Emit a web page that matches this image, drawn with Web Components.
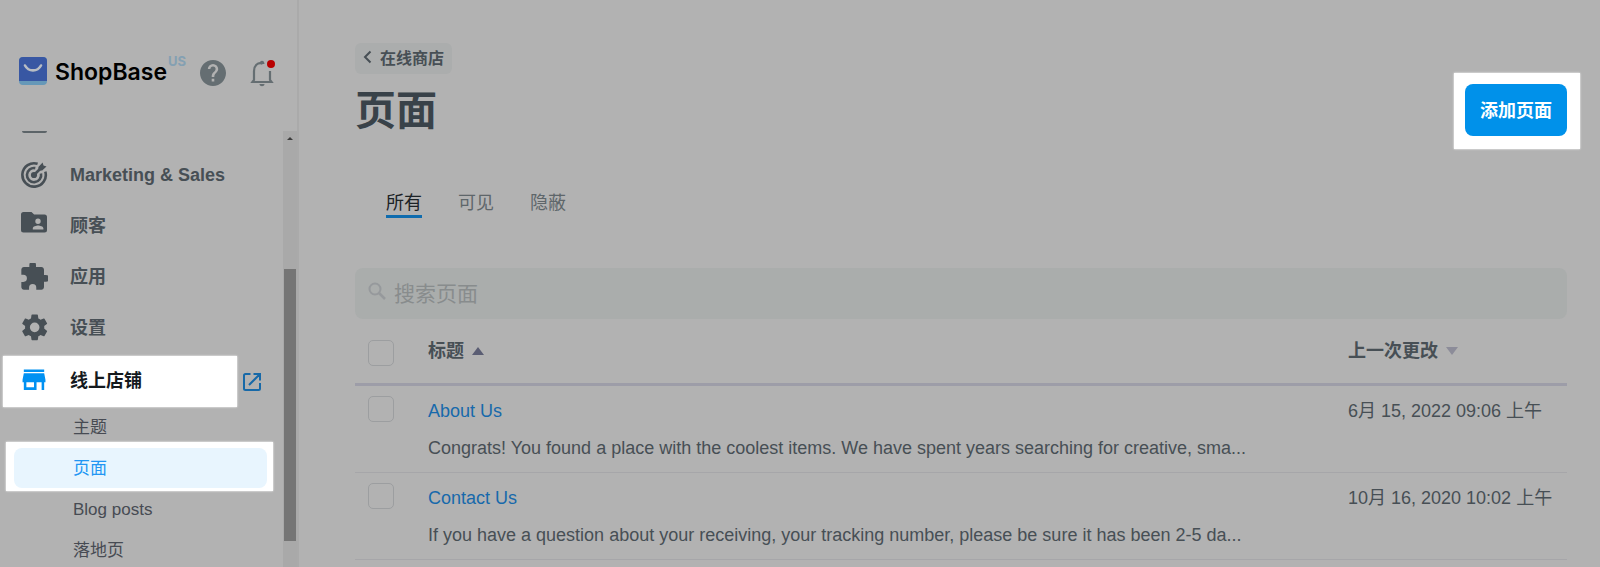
<!DOCTYPE html>
<html lang="zh-CN">
<head>
<meta charset="utf-8">
<meta name="viewport" content="width=device-width, initial-scale=1">
<title>页面 - ShopBase</title>
<style>
  body {
    margin: 0;
    background: #b2b2b2;
    color: #474f55;
    font: 18px/24px "Liberation Sans", "Noto Sans CJK SC", sans-serif;
  }
</style>
</head>
<body>
<admin-shell>
  <side-bar slot="side">
    <nav-item icon="target">Marketing &amp; Sales</nav-item>
    <nav-item icon="folder">顾客</nav-item>
    <nav-item icon="puzzle">应用</nav-item>
    <nav-item icon="gear">设置</nav-item>
    <nav-item icon="store" spotlight>线上店铺</nav-item>
    <sub-item>主题</sub-item>
    <sub-item spotlight>页面</sub-item>
    <sub-item>Blog posts</sub-item>
    <sub-item>落地页</sub-item>
  </side-bar>
  <page-header heading="页面" back="在线商店" action="添加页面"></page-header>
  <filter-tabs></filter-tabs>
  <search-field label="搜索页面"></search-field>
  <pages-table></pages-table>
</admin-shell>

<script>
const ICONS = {
  target: '<svg width="28" height="28" viewBox="0 0 28 28" fill="none" stroke="currentColor" stroke-width="2.6"><path d="M17.6 2.8A11.7 11.7 0 1 0 25.3 10.6"/><path d="M15.3 7.1A7.1 7.1 0 1 0 21 12.6"/><circle cx="14" cy="14" r="3.1" fill="currentColor" stroke="none"/><path d="M14 14l6-6"/><path d="M18.4 9.6V5.9L22.6 1.6l.9 3 3 .9-4.300 4.100z" fill="currentColor" stroke="none"/></svg>',
  folder: '<svg width="28" height="28" viewBox="0 0 28 28" fill="currentColor"><path fill-rule="evenodd" d="M3.500 0h8l2.600 2.600H24.500A2.500 2.500 0 0 1 27 5.100V18a2.500 2.500 0 0 1-2.500 2.500h-21A2.500 2.500 0 0 1 1 18V2.500A2.500 2.500 0 0 1 3.500 0zM18 6.600a2.700 2.700 0 1 0 0 5.400a2.700 2.700 0 0 0 0-5.400zM12.800 17.500h10.600v-1.200c0-1.800-3.500-2.800-5.300-2.800s-5.300 1-5.300 2.800z"/></svg>',
  puzzle: '<svg width="28" height="28" viewBox="1 2 21 21" fill="currentColor"><path d="M20.500 11H19V7c0-1.100-.9-2-2-2h-4V3.500a2.500 2.500 0 0 0-5 0V5H4c-1.100 0-2 .9-2 2v3.800h1.500a2.700 2.700 0 0 1 0 5.400H2V20c0 1.100.9 2 2 2h3.800v-1.500a2.700 2.700 0 0 1 5.400 0V22H17c1.100 0 2-.9 2-2v-4h1.500a2.500 2.500 0 0 0 0-5z"/></svg>',
  gear: '<svg width="28" height="28" viewBox="1 2 21 21" fill="currentColor"><path d="M19.140 12.940c.04-.3.060-.61.060-.94s-.020-.640-.070-.940l2.030-1.580a.49.49 0 0 0 .12-.61l-1.920-3.320a.488.488 0 0 0-.59-.22l-2.390.96c-.5-.38-1.030-.7-1.620-.94l-.36-2.540a.484.484 0 0 0-.48-.41h-3.840c-.24 0-.43.17-.47.41l-.36 2.540c-.59.24-1.130.57-1.620.94l-2.390-.96c-.22-.08-.47 0-.59.22L2.740 8.870c-.12.21-.08.47.12.61l2.030 1.580c-.05.3-.09.63-.09.94s.020.640.070.940l-2.030 1.580a.49.49 0 0 0-.12.61l1.920 3.320c.12.22.37.29.59.22l2.390-.96c.5.38 1.030.7 1.620.94l.36 2.540c.05.24.24.41.48.41h3.840c.24 0 .44-.17.47-.41l.36-2.540c.59-.24 1.130-.56 1.620-.94l2.390.96c.22.08.47 0 .59-.22l1.920-3.320c.12-.22.070-.47-.12-.61zM12 15.600A3.600 3.600 0 1 1 12 8.400a3.600 3.600 0 0 1 0 7.200z"/></svg>',
  store: '<svg width="28" height="28" viewBox="1 2 22 22" fill="currentColor"><path d="M20 4H4v2h16V4zm1 10v-2l-1-5H4l-1 5v2h1v6h10v-6h4v6h2v-6h1zm-9 4H6v-4h6v4z"/></svg>'
};

function define(name, css, html, setup) {
  const template = document.createElement('template');
  template.innerHTML = `<style>*{box-sizing:border-box}${css}</style>${html}`;
  customElements.define(name, class extends HTMLElement {
    constructor() {
      super();
      this.attachShadow({ mode: 'open' }).append(template.content.cloneNode(true));
    }
    connectedCallback() {
      if (setup) setup(this.shadowRoot, this);
    }
  });
}

define('admin-shell', `
  :host { display: flex; height: 100vh; overflow: hidden; }
  aside { flex: none; width: 299px; border-right: 2px solid #aaaaaa; }
  main { flex: 1; min-width: 0; padding: 43px 33px 0 56px; overflow: hidden; }
`, `<aside><slot name="side"></slot></aside><main><slot></slot></main>`);

define('brand-bar', `
  :host { display: flex; align-items: center; height: 131px; padding: 12px 22px 0 18px; }
  .logo { display: flex; align-items: center; gap: 7px; color: #000; text-decoration: none;
    font: 600 23px/32px Inter, sans-serif; }
  .logo svg, button svg { display: block; }
  sup { align-self: flex-start; height: 32px; margin: 41px 0 0 1px; color: #84a0b2; font: 700 13px/16px Inter, sans-serif; }
  button { border: 0; padding: 3px 0 0; background: none; color: #656e72; }
  .help { margin-left: 14px; }
  .bell { margin-left: auto; }
`, `
  <a class="logo" href="#"><svg width="30" height="30" viewBox="0 0 30 30"><rect x="1" y="0" width="28" height="28" rx="4" fill="#6698b8"/><path d="M5 0h20a4 4 0 0 1 4 4v20H1V4a4 4 0 0 1 4-4z" fill="#3857a3"/><path d="M7 8.500c3.500 6.500 12.500 6.500 16 0" fill="none" stroke="#b8bdc4" stroke-width="2.600" stroke-linecap="round"/></svg><span>ShopBase</span></a>
  <sup>US</sup>
  <button class="help" aria-label="Help"><svg width="26" height="26" viewBox="2 2 20 20" fill="currentColor"><path d="M12 2C6.480 2 2 6.480 2 12s4.480 10 10 10 10-4.480 10-10S17.520 2 12 2zm1 16.500h-2v-2h2zm2.070-7.250l-.9.920C13.450 12.900 13 13.500 13 15h-2v-.5c0-1.100.45-2.100 1.170-2.830l1.240-1.260c.37-.36.590-.86.590-1.410a2 2 0 0 0-4 0H8a4 4 0 0 1 8 0c0 .88-.36 1.680-.93 2.250z"/></svg></button>
  <button class="bell" aria-label="Notifications"><svg width="26" height="28" viewBox="0 0 26 28" fill="none" stroke="currentColor"><path d="M13.500 4.600C8.500 3 5 7 5 12v9L3.500 23h19L21 21V12" stroke-width="2.200"/><path d="M10.500 5c0-4.500 5-4.500 5 0z" fill="currentColor" stroke="none"/><path d="M10.500 25h5c0 3-5 3-5 0z" fill="currentColor" stroke="none"/><circle cx="22" cy="5" r="4" fill="#b80000" stroke="none"/></svg></button>
`);

define('side-bar', `
  :host { display: flex; flex-direction: column; height: 100vh; }
  .scroll { flex: 1; min-height: 0; display: flex; }
  nav { flex: 1; min-width: 0; overflow: hidden; }
  hr { width: 25px; height: 2px; margin: 0 0 16px 22px; border: 0; background: #5c6468; border-radius: 0 0 2px 2px; }
  .rail { flex: none; width: 14px; padding: 5px 1px 0; background: #a9a9a9; display: flex; flex-direction: column; align-items: center; }
  .thumb { width: 12px; height: 63%; margin-top: 128px; background: #757575; }
  svg { display: block; flex: none; }
`, `
  <brand-bar></brand-bar>
  <div class="scroll">
    <nav><hr><slot></slot></nav>
    <div class="rail"><svg width="6" height="5" viewBox="0 0 6 5"><path d="M0 4l3-3 3 3z" fill="#3d3d3d"/></svg><div class="thumb"></div></div>
  </div>
`);

define('nav-item', `
  :host { display: flex; align-items: center; height: 51px; }
  a { display: flex; align-items: center; width: 234px; height: 100%; gap: 22px; padding-left: 20px;
    color: #474f55; font-weight: 700; text-decoration: none; }
  .icon { display: flex; width: 28px; flex: none; }
  :host([spotlight]) { margin-top: 3px; padding-left: 3px; gap: 5px; }
  :host([spotlight]) .main { padding: 0 0 2px 17px; background: #fff; color: #151a1e; box-shadow: 0 0 2px #fff; }
  :host([spotlight]) .icon { color: #0091f2; }
  .open { width: 20px; padding: 0; color: #1769a8; }
`, `<a class="main" href="#"><span class="icon"></span><slot></slot></a>
  <a class="open" href="#" aria-label="Open store"><svg width="20" height="20" viewBox="0 0 20 20" fill="none" stroke="currentColor" stroke-width="2"><path d="M8.500 2H3.500A1.500 1.500 0 0 0 2 3.500v13A1.500 1.500 0 0 0 3.500 18h13a1.500 1.500 0 0 0 1.500-1.500V11M11.500 2H18v6.500M18 2L7 13"/></svg></a>`,
  (root, host) => {
    root.querySelector('.icon').innerHTML = ICONS[host.getAttribute('icon')];
    if (!host.hasAttribute('spotlight')) root.querySelector('.open').remove();
  });

define('sub-item', `
  :host { display: block; position: relative; height: 40px; margin: 0 16px 1px 14px; }
  a { position: relative; display: flex; align-items: center; height: 100%; padding: 2px 0 0 59px;
    color: #474b53; font-size: 17px; text-decoration: none; border-radius: 8px; }
  :host([spotlight]) a { background: #e8f5fe; color: #2196f3; }
  :host([spotlight])::before { content: ""; position: absolute; inset: -6px -6px -3px -8px; background: #fff; box-shadow: 0 0 2px #fff; }
`, `<a href="#"><slot></slot></a>`);

define('page-header', `
  :host { display: flex; justify-content: space-between; align-items: flex-start; }
  .back { display: inline-flex; align-items: center; gap: 8px; height: 31px; padding: 0 8px; border-radius: 6px;
    background: #abadad; color: #474f55; font-size: 16px; font-weight: 700; text-decoration: none; }
  .back svg { margin-bottom: 4px; }
  h1 { margin: 13px 0 0; color: #394249; font-size: 41px; line-height: 48px; }
  .spot { margin: 30px -13px 0 0; padding: 11px 13px 13px 11px; background: #fff; box-shadow: 0 0 2px #fff; }
  button { display: block; height: 52px; padding: 1px 15px 0; border: 0; border-radius: 8px; background: #0091ea; color: #fff;
    font: inherit; font-weight: 700; }
`, `
  <div><a class="back" href="#"><svg width="9" height="14" viewBox="0 0 9 14" fill="none" stroke="currentColor" stroke-width="2"><path d="M7.500 1.500L2 7l5.500 5.500"/></svg><span></span></a><h1></h1></div>
  <div class="spot"><button></button></div>`,
  (root, host) => {
    root.querySelector('.back span').textContent = host.getAttribute('back');
    root.querySelector('h1').textContent = host.getAttribute('heading');
    root.querySelector('button').textContent = host.getAttribute('action');
  });

define('filter-tabs', `
  :host { display: flex; gap: 36px; margin: 39px 0 50px; padding-left: 31px; }
  button { height: 30px; padding: 2px 0 0; border: 0; border-bottom: 3px solid transparent; background: none; color: #5e666a;
    font: inherit; }
  .on { color: #1c2226; border-color: #0f6cae; }
`, `<button class="on">所有</button><button>可见</button><button>隐蔽</button>`);

define('search-field', `
  :host { display: block; }
  label { display: flex; align-items: center; height: 51px; gap: 7px; padding: 0 12px; border-radius: 8px; background: #aaadac; }
  svg { flex: none; margin-bottom: 6px; }
  input { flex: 1; min-width: 0; height: 32px; padding: 0; border: 0; outline: 0; background: none; color: #474f55; font: inherit; font-size: 21px; }
  input::placeholder { color: #888c8d; opacity: 1; }
`, `<label><svg width="20" height="20" viewBox="0 0 20 20" fill="none" stroke="#96999c" stroke-width="2"><circle cx="8" cy="8" r="5.500"/><path d="M12 12l6 6" stroke-width="2.500"/></svg><input type="search"></label>`,
  (root, host) => {
    const input = root.querySelector('input');
    input.placeholder = host.getAttribute('label');
    input.setAttribute('aria-label', host.getAttribute('label'));
  });

define('pages-table', `
  :host { display: block; }
  table { width: 100%; table-layout: fixed; border-collapse: separate; border-spacing: 0; }
  th, td { padding: 0; text-align: left; vertical-align: top; border-bottom: 1px solid #a6a6a9; }
  th { height: 67px; padding-top: 20px; border-bottom: 3px solid #9d9da8; font-weight: 700; }
  td { height: 87px; padding-top: 13px; }
  .check { width: 73px; padding-left: 13px; }
  td.check { padding-top: 10px; }
  th.check { padding-top: 21px; }
  .date { width: 219px; }
  input { display: block; appearance: none; width: 26px; height: 26px; margin: 0; border: 1px solid #9c9ea0; border-radius: 5px; }
  th button { display: flex; align-items: center; gap: 8px; padding: 0; border: 0; background: none; color: inherit; font: inherit; }
  a { color: #1769ab; text-decoration: none; }
  p { margin: 13px 0 0; }
`, `<table>
  <thead><tr>
    <th class="check"><input type="checkbox" aria-label="全选"></th>
    <th><button>标题<svg width="12" height="8" viewBox="0 0 12 8"><path d="M0 8l6-8 6 8z" fill="#5a5d73"/></svg></button></th>
    <th class="date"><button>上一次更改<svg width="12" height="8" viewBox="0 0 12 8"><path d="M0 0h12L6 8z" fill="#8c8c99"/></svg></button></th>
  </tr></thead>
  <tbody>
    <tr><td class="check"><input type="checkbox" aria-label="About Us"></td>
      <td><a href="#">About Us</a><p>Congrats! You found a place with the coolest items. We have spent years searching for creative, sma...</p></td>
      <td class="date">6月 15, 2022 09:06 上午</td></tr>
    <tr><td class="check"><input type="checkbox" aria-label="Contact Us"></td>
      <td><a href="#">Contact Us</a><p>If you have a question about your receiving, your tracking number, please be sure it has been 2-5 da...</p></td>
      <td class="date">10月 16, 2020 10:02 上午</td></tr>
  </tbody>
</table>`);
</script>
</body>
</html>
